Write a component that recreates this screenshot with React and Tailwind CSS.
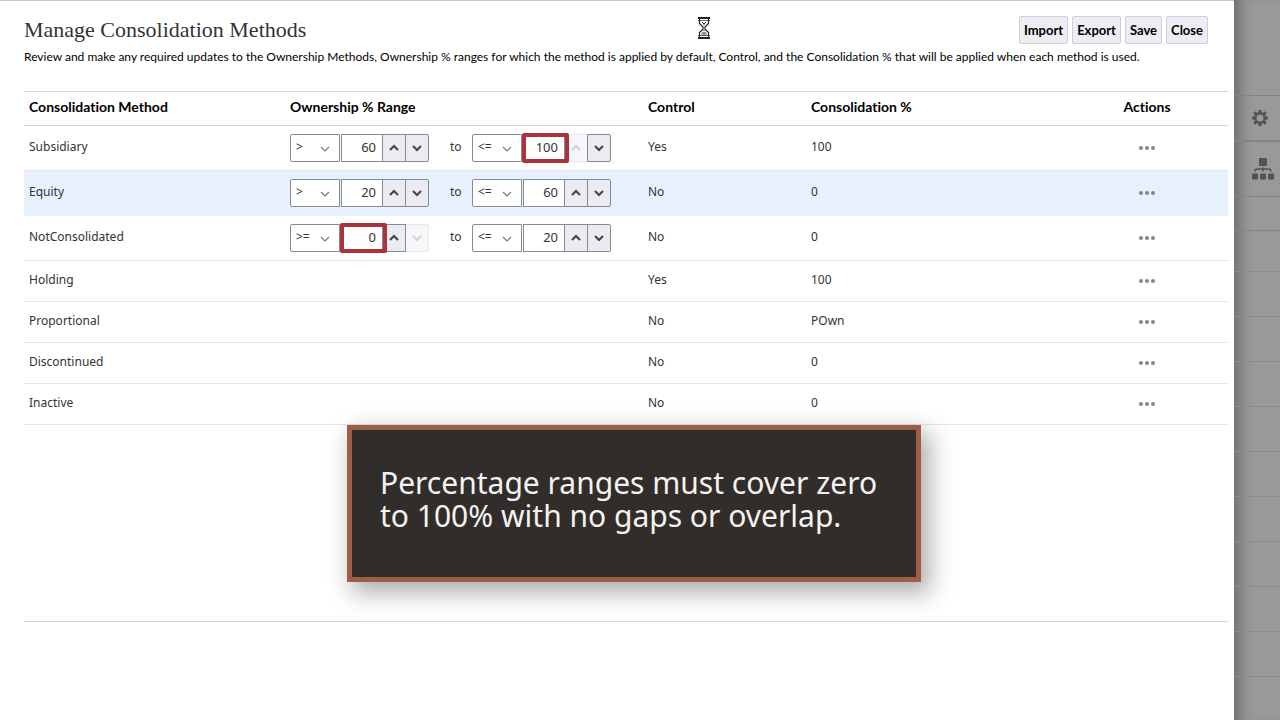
import clsx from "clsx";

const METHODS = [
  {
    name: "Subsidiary",
    from: { op: ">", value: 60 },
    to: { op: "<=", value: 100, marked: true, upDisabled: true },
    control: "Yes",
    percent: "100",
  },
  {
    name: "Equity",
    from: { op: ">", value: 20 },
    to: { op: "<=", value: 60 },
    control: "No",
    percent: "0",
    selected: true,
  },
  {
    name: "NotConsolidated",
    from: { op: ">=", value: 0, marked: true, downDisabled: true },
    to: { op: "<=", value: 20 },
    control: "No",
    percent: "0",
  },
  { name: "Holding", control: "Yes", percent: "100" },
  { name: "Proportional", control: "No", percent: "POwn" },
  { name: "Discontinued", control: "No", percent: "0" },
  { name: "Inactive", control: "No", percent: "0" },
];

const OPERATORS = { from: [">", ">="], to: ["<", "<="] };

const Chevron = ({ up, thin }) => (
  <svg
    viewBox="0 0 10 10"
    className="w-[10px] h-[10px] pointer-events-none"
    fill="none"
    stroke="currentColor"
    strokeWidth={thin ? 1.1 : 2.1}
  >
    <path d={up ? "M1 7 L5 3 L9 7" : "M1 3 L5 7 L9 3"} />
  </svg>
);

const SpinButton = ({ up, disabled, label }) => (
  <button
    type="button"
    aria-label={label}
    disabled={disabled}
    className={clsx(
      "w-6 h-7 -ml-px flex items-center justify-center border",
      !up && "rounded-r-xs",
      disabled
        ? "border-[#e6e6ec] bg-[#f7f7fa] text-[#d3d3d8]"
        : "relative border-[#858c97] bg-[#ebebf1] text-[#444]"
    )}
  >
    <Chevron up={up} />
  </button>
);

const Bound = ({ side, method, bound }) => (
  <div className="flex items-center gap-px">
    <div className="relative">
      <select
        aria-label={`${method} ${side} operator`}
        defaultValue={bound.op}
        className="block w-[50px] h-7 pl-[5px] pb-px appearance-none border border-[#858c97] rounded-l-xs bg-white text-xs text-[#333]"
      >
        {OPERATORS[side].map((op) => (
          <option key={op}>{op}</option>
        ))}
      </select>
      <span className="absolute right-[10px] top-[10px] text-[#777] pointer-events-none">
        <Chevron thin />
      </span>
    </div>

    <div className="flex">
      <div className="relative">
        <input
          type="text"
          inputMode="numeric"
          aria-label={`${method} ${side} value`}
          defaultValue={bound.value}
          className="block w-[42px] h-7 pr-[6px] pb-px border border-[#858c97] bg-white text-[13px] text-right text-[#333]"
        />
        {bound.marked && (
          <div className="absolute z-10 -left-px -right-1 -top-px -bottom-px border-4 border-[#ac333c] rounded-xs pointer-events-none" />
        )}
      </div>
      <SpinButton up disabled={bound.upDisabled} label={`Increase ${method} ${side}`} />
      <SpinButton disabled={bound.downDisabled} label={`Decrease ${method} ${side}`} />
    </div>
  </div>
);

const MethodRow = ({ method }) => (
  <tr
    className={clsx(
      "border-b",
      method.from ? "h-[45px]" : "h-[41px]",
      method.selected ? "bg-[#e7f1fe] border-[#e7f1fe]" : "border-[#e6e6e6]"
    )}
  >
    <td className="px-[5px] pb-px">{method.name}</td>
    <td className="px-[5px]">
      {method.from && (
        <div className="flex items-center">
          <Bound side="from" method={method.name} bound={method.from} />
          <span className="w-[43px] pl-[21px] pb-px">to</span>
          <Bound side="to" method={method.name} bound={method.to} />
        </div>
      )}
    </td>
    <td className="px-[5px] pb-px">{method.control}</td>
    <td className="px-[5px] pb-px">{method.percent}</td>
    <td className="px-[5px]">
      <button
        type="button"
        aria-label={`Actions for ${method.name}`}
        className="flex gap-[2px] mx-auto"
      >
        <span className="w-1 h-1 rounded-full bg-[#858585]" />
        <span className="w-1 h-1 rounded-full bg-[#858585]" />
        <span className="w-1 h-1 rounded-full bg-[#858585]" />
      </button>
    </td>
  </tr>
);

const GearIcon = () => (
  <svg viewBox="0 0 16 16" className="w-4 h-4" fill="none" stroke="#545255">
    <circle cx="8" cy="8" r="4.7" strokeWidth="2.4" />
    <g strokeWidth="3">
      <path d="M8 0v3M8 13v3M0 8h3M13 8h3M2.3 2.3l2 2M11.7 11.7l2 2M13.7 2.3l-2 2M4.3 11.7l-2 2" />
    </g>
  </svg>
);

const HierarchyIcon = () => (
  <svg viewBox="0 0 22 22" className="w-[22px] h-[22px] shrink-0" fill="#545255">
    <rect x="7" y="0" width="8" height="8" rx="1" />
    <path
      d="M3 13.5q0-2.5 2.5-2.5h11q2.5 0 2.5 2.5M11 9.5v4"
      fill="none"
      stroke="#545255"
      strokeWidth="1.6"
    />
    <rect x="0" y="15.5" width="6" height="6" rx="1" />
    <rect x="8" y="15.5" width="6" height="6" rx="1" />
    <rect x="16" y="15.5" width="6" height="6" rx="1" />
  </svg>
);

const Hourglass = () => (
  <svg viewBox="0 0 12 22" className="w-3 h-[22px]" fill="none" stroke="#222">
    <path d="M0 1h12M0 21h12" strokeWidth="2" />
    <path d="M0 3.5h12M0 18.5h12" strokeWidth="1" stroke="#666" />
    <path d="M1.5 2v4.5L5 10v2l-3.5 3.5V20M10.5 2v4.5L7 10v2l3.5 3.5V20" strokeWidth="1.2" />
    <path d="M4 5.5h1M7 5.5h1M5 6.5h2M5.5 7.5h1M5.5 13.5h1M4.5 15.5h1M6.5 15.5h1M3.5 17h5" />
  </svg>
);

const BackdropStrip = () => (
  <div className="w-[46px] shrink-0 flex flex-col bg-[#9a989b] shadow-[inset_14px_0_14px_-8px_#6f6d70]">
    <div className="h-[95px]" />
    <div className="h-[45px] pl-[18px] flex items-center border-t border-[#858386]">
      <GearIcon />
    </div>
    <div className="h-14 pl-[18px] flex items-center border-t-2 border-[#858386]">
      <HierarchyIcon />
    </div>
    <div className="h-[34px] border-t border-[#858386]" />
    <div className="h-[41px] border-t border-[#858386]" />
    {Array.from({ length: 10 }, (_, i) => (
      <div key={i} className="h-[45px] border-t border-[#8b898c]" />
    ))}
  </div>
);

const App = () => {
  return (
    <div className="min-h-screen flex bg-white font-['Noto_Sans',sans-serif] text-xs leading-5 text-[#333] [font-variant-ligatures:none] overflow-hidden">
      <main className="relative flex-1 min-w-0 pl-6 pr-[6px] border-t border-[#c8c8c8]">
        {/* HEADER */}
        <header className="pt-[15px] pr-5 flex items-start justify-between">
          <h1 className="font-['Georgia','Liberation_Serif',serif] text-[22px] leading-7">
            Manage Consolidation Methods
          </h1>
          <div className="flex gap-1">
            {["Import", "Export", "Save", "Close"].map((label) => (
              <button
                key={label}
                type="button"
                className="h-7 px-1 border border-[#cfcfd8] rounded-xs bg-[#ededf3] font-['Lato',sans-serif] text-[13px] font-bold text-black"
              >
                {label}
              </button>
            ))}
          </div>
        </header>
        <p className="mt-[3px] font-['Lato',sans-serif] text-black">
          Review and make any required updates to the Ownership Methods, Ownership % ranges for
          which the method is applied by default, Control, and the Consolidation % that will be
          applied when each method is used.
        </p>

        {/* METHODS TABLE */}
        <div className="mt-6 min-h-[531px] border-y border-[#d6d6d9]">
          <table className="w-full table-fixed border-collapse text-left">
            <thead>
              <tr className="h-[33px] border-b border-[#d6d6d9] font-['Lato',sans-serif] text-sm text-black">
                <th className="w-[261px] px-[5px] pb-[3px]">Consolidation Method</th>
                <th className="w-[358px] px-[5px] pb-[3px]">Ownership % Range</th>
                <th className="w-[163px] px-[5px] pb-[3px]">Control</th>
                <th className="px-[5px] pb-[3px]">Consolidation %</th>
                <th className="w-[162px] px-[5px] pb-[3px] text-center">Actions</th>
              </tr>
            </thead>
            <tbody>
              {METHODS.map((method) => (
                <MethodRow key={method.name} method={method} />
              ))}
            </tbody>
          </table>
        </div>

        {/* WAIT CURSOR */}
        <div className="absolute left-[698px] top-4 pointer-events-none">
          <Hourglass />
        </div>

        {/* CALLOUT */}
        <aside className="absolute left-[347px] top-[424px] w-[574px] h-[157px] px-7 pt-9 border-[5px] border-[#9c5f46] bg-[#312d2a] text-[30px] leading-[33px] text-[#f5f2f0] shadow-[7px_9px_22px_2px_rgba(60,50,60,0.4)]">
          Percentage ranges must cover zero to 100% with no gaps or overlap.
        </aside>
      </main>

      <BackdropStrip />
    </div>
  );
};

export default App;
